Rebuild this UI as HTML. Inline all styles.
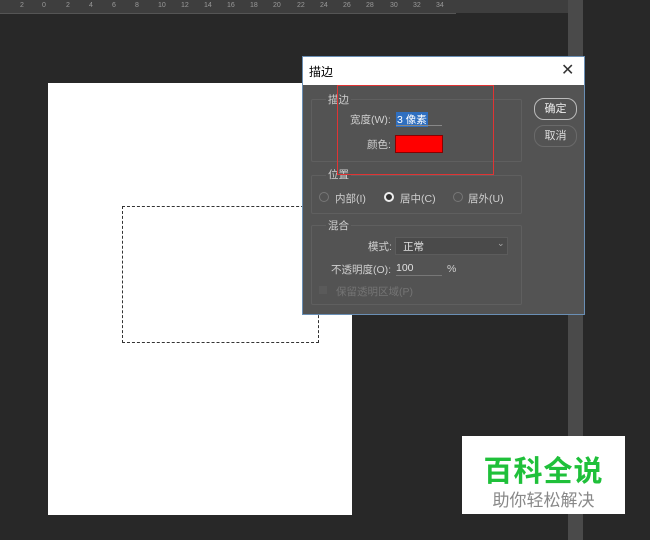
<!DOCTYPE html>
<html><head><style>
body{margin:0;width:650px;height:540px;background:#282828;position:relative;overflow:hidden;font-family:"Liberation Sans","Noto Sans CJK SC",sans-serif}
.a{position:absolute}
.t{font-size:10.5px;color:#d0d0d0}
.grp{position:absolute;border:1px solid #5f5f5f;border-radius:2px}
.r{position:absolute;background:#e03434}
</style></head><body>
<div class="a" style="left:0;top:0;width:456px;height:13px;background:#3e3e3e;border-bottom:1px solid #555"></div>
<div class="a" style="left:0;top:0;width:456px;height:13px;font-size:7px;color:#999;">
<span class="a" style="left:20px;top:2px">2</span><span class="a" style="left:42px;top:2px">0</span><span class="a" style="left:66px;top:2px">2</span><span class="a" style="left:89px;top:2px">4</span><span class="a" style="left:112px;top:2px">6</span><span class="a" style="left:135px;top:2px">8</span><span class="a" style="left:158px;top:2px">10</span><span class="a" style="left:181px;top:2px">12</span><span class="a" style="left:204px;top:2px">14</span><span class="a" style="left:227px;top:2px">16</span><span class="a" style="left:250px;top:2px">18</span><span class="a" style="left:273px;top:2px">20</span><span class="a" style="left:297px;top:2px">22</span><span class="a" style="left:320px;top:2px">24</span><span class="a" style="left:343px;top:2px">26</span><span class="a" style="left:366px;top:2px">28</span><span class="a" style="left:390px;top:2px">30</span><span class="a" style="left:413px;top:2px">32</span><span class="a" style="left:436px;top:2px">34</span></div>
<div class="a" style="left:456px;top:0;width:112px;height:13px;background:#3e3e3e"></div>
<div class="a" style="left:568px;top:0;width:15px;height:540px;background:#4a4a4a"></div>
<div class="a" style="left:48px;top:83px;width:304px;height:432px;background:#fff"></div>
<div class="a" style="left:122px;top:206px;width:195px;height:135px;border:1px dashed #333"></div>
<div class="a" style="left:302px;top:56px;width:283px;height:259px;background:#535353;border:1px solid #6a8fb5;box-sizing:border-box"></div>
<div class="a" style="left:303px;top:57px;width:281px;height:28px;background:#fff"></div>
<div class="a" style="left:309px;top:63px;font-size:12px;color:#000">描边</div>
<div class="a" style="left:561px;top:60px;font-size:16px;color:#333">✕</div>
<div class="grp" style="left:311px;top:99px;width:209px;height:61px"></div>
<div class="a t" style="left:326px;top:92px;background:#535353;padding:0 2px">描边</div>
<div class="a t" style="left:350px;top:112px">宽度(W):</div>
<div class="a" style="left:396px;top:112px;font-size:10.5px;color:#fff;background:#2f6fc0;padding:0 1px">3 像素</div>
<div class="a" style="left:396px;top:125px;width:46px;height:1px;background:#888"></div>
<div class="a t" style="left:367px;top:137px">颜色:</div>
<div class="a" style="left:395px;top:135px;width:46px;height:16px;background:#f00;border:1px solid #800"></div>
<div class="grp" style="left:311px;top:175px;width:209px;height:37px"></div>
<div class="a t" style="left:326px;top:167px;background:#535353;padding:0 2px">位置</div>
<div class="a" style="left:319px;top:192px;width:8px;height:8px;border-radius:50%;border:1px solid #777"></div>
<div class="a t" style="left:335px;top:191px">内部(I)</div>
<div class="a" style="left:384px;top:192px;width:6px;height:6px;border-radius:50%;border:2px solid #eee;background:#333"></div>
<div class="a t" style="left:400px;top:191px">居中(C)</div>
<div class="a" style="left:453px;top:192px;width:8px;height:8px;border-radius:50%;border:1px solid #777"></div>
<div class="a t" style="left:468px;top:191px">居外(U)</div>
<div class="grp" style="left:311px;top:225px;width:209px;height:78px"></div>
<div class="a t" style="left:326px;top:218px;background:#535353;padding:0 2px">混合</div>
<div class="a t" style="left:368px;top:239px">模式:</div>
<div class="a" style="left:395px;top:237px;width:111px;height:16px;background:#4a4a4a;border:1px solid #5c5c5c"></div>
<div class="a t" style="left:403px;top:239px;color:#e0e0e0">正常</div>
<div class="a" style="left:497px;top:238px;font-size:9px;color:#aaa">⌄</div>
<div class="a t" style="left:331px;top:262px">不透明度(O):</div>
<div class="a t" style="left:396px;top:262px;color:#e0e0e0">100</div>
<div class="a" style="left:396px;top:275px;width:46px;height:1px;background:#777"></div>
<div class="a t" style="left:447px;top:263px">%</div>
<div class="a" style="left:319px;top:286px;width:8px;height:8px;background:#5a5a5a"></div>
<div class="a t" style="left:336px;top:284px;color:#747474">保留透明区域(P)</div>
<div class="a" style="left:534px;top:98px;width:41px;height:20px;border:1px solid #bbb;border-radius:10px;text-align:center;line-height:20px;font-size:11px;color:#eee">确定</div>
<div class="a" style="left:534px;top:125px;width:41px;height:20px;border:1px solid #6a6a6a;border-radius:10px;text-align:center;line-height:20px;font-size:11px;color:#ddd">取消</div>
<div class="r" style="left:337px;top:85px;width:157px;height:1px"></div>
<div class="r" style="left:337px;top:174px;width:157px;height:1px"></div>
<div class="r" style="left:337px;top:85px;width:1px;height:90px"></div>
<div class="r" style="left:493px;top:85px;width:1px;height:90px"></div>
<div class="a" style="left:462px;top:436px;width:163px;height:78px;background:#fff"></div>
<div class="a" style="left:462px;top:448px;width:163px;text-align:center;font-size:29px;font-weight:bold;color:#1fc03a;letter-spacing:1px">百科全说</div>
<div class="a" style="left:462px;top:486px;width:163px;text-align:center;font-size:17px;color:#888">助你轻松解决</div>
</body></html>
